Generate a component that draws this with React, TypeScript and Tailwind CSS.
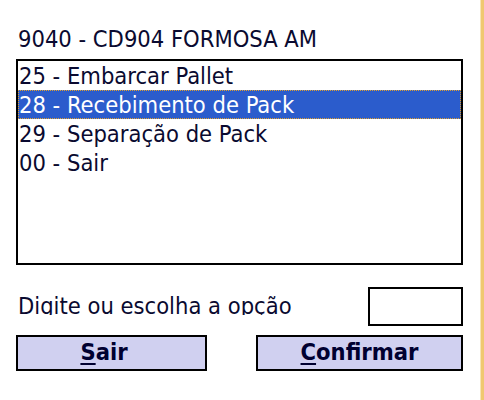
const OPTIONS = [
  { code: '25', label: 'Embarcar Pallet' },
  { code: '28', label: 'Recebimento de Pack' },
  { code: '29', label: 'Separação de Pack' },
  { code: '00', label: 'Sair' },
]

const FONT = "font-['DejaVu_Sans_Condensed','DejaVu_Sans',sans-serif]"

export default function App() {
  const selected = 1

  return (
    <div className={`flex w-[484px] h-[400px] bg-white text-[#0a0a30] text-[23.5px] ${FONT}`}>
      <div className="w-[480px] pl-4 pr-[17px]">
        <div className="h-[59px] pt-[25px] pl-[2px] leading-[28px] whitespace-nowrap">9040 - CD904 FORMOSA AM</div>

        <div className="h-[206px] border-2 border-black overflow-hidden">
          {OPTIONS.map((opt, i) => (
            <div
              key={opt.code}
              className={`h-[29px] leading-[29px] whitespace-nowrap border border-dotted ${
                i === selected ? 'bg-[#2b5ccc] text-white border-[#e0a030]' : 'border-transparent'
              }`}
            >
              {opt.code} - {opt.label}
            </div>
          ))}
        </div>

        <div className="flex items-start justify-between mt-[22px]">
          {/* the device clips this label at its baseline */}
          <div className="h-[23px] mt-[5px] pl-[2px] leading-[28px] overflow-hidden whitespace-nowrap">
            Digite ou escolha a opção
          </div>
          <input className="w-[95px] h-[39px] border-2 border-black bg-white outline-none" />
        </div>

        <div className="flex justify-between mt-[9px]">
          <button className="w-[191px] h-[36px] border-2 border-black bg-[#d0d0f0] font-bold text-[#000030] pr-[15px] leading-none">
            <span className="underline underline-offset-[3px] decoration-2">S</span>air
          </button>
          <button className="w-[207px] h-[36px] border-2 border-black bg-[#d0d0f0] font-bold text-[#000030] leading-none">
            <span className="underline underline-offset-[3px] decoration-2">C</span>onfirmar
          </button>
        </div>
      </div>
      <div className="w-px bg-[#f8e4b4]" />
      <div className="w-[3px] bg-[#f0c870]" />
    </div>
  )
}
